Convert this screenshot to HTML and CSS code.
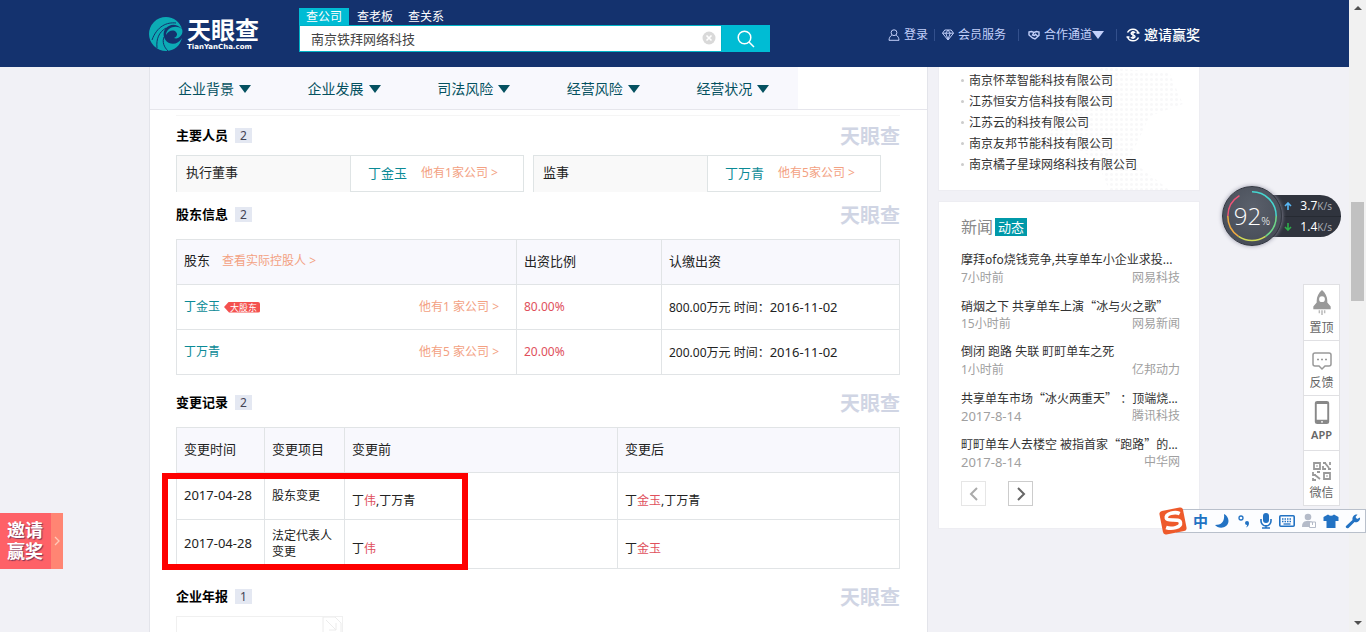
FILE: index.html
```html
<!DOCTYPE html>
<html lang="zh-CN">
<head>
<meta charset="utf-8">
<title>天眼查</title>
<link rel="stylesheet" href="styles.css">
</head>
<body>
<div class="screen">
  <div class="page">
    <header class="topbar">
      <div class="wrap topbar-inner">
        <a class="logo" href="#">
          <svg class="logo-mark" viewBox="0 0 34 34" aria-hidden="true">
            <path d="M17 0C25 0 31 5 33 12C27 6 21 7 17 11C13 15 14 23 20 26C25 28 30 26 33 21C31 29 25 34 17 34A17 17 0 0 1 17 0Z" fill="#0cabb5"/>
            <path d="M33 12C35 17 30 23 25 21C28 20 29 17 27 15C24 12 19 14 17 18C17 11 27 7 33 12Z" fill="#0cabb5"/>
            <g fill="none" stroke="#14326e" stroke-width="1">
              <path d="M27 6C18 5 8 9 3 23"/>
              <path d="M17 11C10 15 7 22 8 31"/>
              <path d="M15 20C13 25 15 30 19 34"/>
            </g>
          </svg>
          <span class="logo-text"><b>天眼查</b><small>TianYanCha.com</small></span>
        </a>
        <form class="search">
          <div class="tabs">
            <button type="button" class="tab active">查公司</button>
            <button type="button" class="tab">查老板</button>
            <button type="button" class="tab">查关系</button>
          </div>
          <div class="search-row">
            <input class="search-input" type="text" value="南京铁拜网络科技" aria-label="搜索">
            <button type="button" class="clear" aria-label="清除"><svg viewBox="0 0 14 14"><circle cx="7" cy="7" r="6.5" fill="#d9d9d9"/><path d="M4.500 4.500L9.500 9.500M9.500 4.500L4.500 9.500" stroke="#fff" stroke-width="1.600"/></svg></button>
            <button type="button" class="go" aria-label="查询"><svg viewBox="0 0 18 18" fill="none" stroke="#fff" stroke-width="1.500"><circle cx="7.500" cy="7.500" r="6.300"/><path d="M12 12L17 17"/></svg></button>
          </div>
        </form>
        <nav class="usernav">
          <a href="#"><svg viewBox="0 0 12 12" fill="none" stroke="#c3d0fa"><circle cx="6" cy="3.700" r="2.900"/><path d="M3.800 6.200C2 7.300 1.200 8.700 1 11.300H11C10.800 8.700 10 7.300 8.200 6.200"/></svg>登录</a>
          <i></i>
          <a href="#"><svg viewBox="0 0 12 12" fill="none" stroke="#c3d0fa"><path d="M2.800 1H9.200L11.500 4.200L6 11L.5 4.200ZM.5 4.200H11.500M3.800 4.200L6 10.500L8.200 4.200L6 1L3.800 4.200"/></svg>会员服务</a>
          <i></i>
          <a href="#"><svg viewBox="0 0 12 12" fill="none" stroke="#c3d0fa" stroke-width="1.400"><path d="M1 3L3.500 2.500L6 3.500L8.500 2.500L11 3L11 6.500L7 10L4.500 9L1 6ZM6 3.500L4.500 6L6.500 6.500L7.500 5.200L10 7.500"/></svg>合作通道<span class="caret"></span></a>
          <i></i>
          <a class="invite-link" href="#"><svg viewBox="0 0 14 14" fill="none" stroke="#fff" stroke-width="1.500"><path d="M1.500 4.500A6 6 0 0 1 12.500 5M12.500 9.500A6 6 0 0 1 1.500 9M10.500 5H13.500M.5 9H3.500M9.200 4.800C8 3.600 5.200 3.800 5.200 5.400C5.200 7.300 9 6.500 9 8.500C9 10.300 6 10.400 4.800 9.200M7 3V11"/></svg>邀请赢奖</a>
        </nav>
      </div>
    </header>

    <div class="wrap columns">
      <main class="main">
        <nav class="catnav">
          <a href="#">企业背景<span class="caret"></span></a>
          <a href="#">企业发展<span class="caret"></span></a>
          <a href="#">司法风险<span class="caret"></span></a>
          <a href="#">经营风险<span class="caret"></span></a>
          <a href="#">经营状况<span class="caret"></span></a>
        </nav>
        <div class="content">
          <section class="staff-section">
            <div class="head"><h2>主要人员</h2><span class="count">2</span><span class="mark">天眼查</span></div>
            <div class="staff">
              <div class="person"><span class="role">执行董事</span><span class="who"><a class="name" href="#">丁金玉</a><a class="more" href="#">他有1家公司 &gt;</a></span></div>
              <div class="person"><span class="role">监事</span><span class="who"><a class="name" href="#">丁万青</a><a class="more" href="#">他有5家公司 &gt;</a></span></div>
            </div>
          </section>

          <section class="holder-section">
            <div class="head"><h2>股东信息</h2><span class="count">2</span><span class="mark">天眼查</span></div>
            <table class="grid">
              <colgroup><col class="c-holder"><col class="c-ratio"><col></colgroup>
              <thead><tr><th>股东<a class="more control" href="#">查看实际控股人 &gt;</a></th><th>出资比例</th><th>认缴出资</th></tr></thead>
              <tbody>
                <tr><td><div class="holder"><a class="name" href="#">丁金玉</a><span class="major">大股东</span><a class="more" href="#">他有1 家公司 &gt;</a></div></td><td class="red">80.00%</td><td>800.00万元 时间：<time>2016-11-02</time></td></tr>
                <tr><td><div class="holder"><a class="name" href="#">丁万青</a><a class="more" href="#">他有5 家公司 &gt;</a></div></td><td class="red">20.00%</td><td>200.00万元 时间：<time>2016-11-02</time></td></tr>
              </tbody>
            </table>
          </section>

          <section class="change-section">
            <div class="head"><h2>变更记录</h2><span class="count">2</span><span class="mark">天眼查</span></div>
            <table class="grid changes">
              <colgroup><col class="c-date"><col class="c-item"><col class="c-before"><col></colgroup>
              <thead><tr><th>变更时间</th><th>变更项目</th><th>变更前</th><th>变更后</th></tr></thead>
              <tbody>
                <tr><td><time>2017-04-28</time></td><td>股东变更</td><td class="diff">丁<em>伟</em>,丁万青</td><td class="diff">丁<em>金玉</em>,丁万青</td></tr>
                <tr><td><time>2017-04-28</time></td><td>法定代表人变更</td><td class="diff">丁<em>伟</em></td><td class="diff">丁<em>金玉</em></td></tr>
              </tbody>
            </table>
          </section>

          <section class="report-section">
            <div class="head"><h2>企业年报</h2><span class="count">1</span><span class="mark">天眼查</span></div>
            <div class="report"><svg viewBox="0 0 20 16" fill="none" stroke="#ececec"><path d="M1 0V16M1 0H13L19 6V16M4 3L14 13M14 6V13H7"/></svg></div>
          </section>
        </div>
        <div class="highlight"></div>
      </main>

      <aside class="side">
        <section class="card related">
          <div class="map"></div>
          <ul>
            <li><a href="#">南京怀萃智能科技有限公司</a></li>
            <li><a href="#">江苏恒安方信科技有限公司</a></li>
            <li><a href="#">江苏云的科技有限公司</a></li>
            <li><a href="#">南京友邦节能科技有限公司</a></li>
            <li><a href="#">南京橘子星球网络科技有限公司</a></li>
          </ul>
        </section>
        <section class="card news">
          <h3>新闻<span>动态</span></h3>
          <article><a href="#">摩拜ofo烧钱竞争,共享单车小企业求投...</a><p><span>7小时前</span><span>网易科技</span></p></article>
          <article><a href="#">硝烟之下 共享单车上演<q>“</q>冰与火之歌<q>”</q></a><p><span>15小时前</span><span>网易新闻</span></p></article>
          <article><a href="#">倒闭 跑路 失联 町町单车之死</a><p><span>1小时前</span><span>亿邦动力</span></p></article>
          <article><a href="#">共享单车市场<q>“</q>冰火两重天<q>”</q> ：顶端烧...</a><p><time>2017-8-14</time><span>腾讯科技</span></p></article>
          <article><a href="#">町町单车人去楼空 被指首家<q>“</q>跑路<q>”</q>的...</a><p><time>2017-8-14</time><span>中华网</span></p></article>
          <div class="pager">
            <button type="button" class="prev" aria-label="上一页"><svg viewBox="0 0 12 14"><path d="M9 1L3 7L9 13"/></svg></button>
            <button type="button" aria-label="下一页"><svg viewBox="0 0 12 14"><path d="M3 1L9 7L3 13"/></svg></button>
          </div>
        </section>
      </aside>
    </div>
  </div>

  <div class="scrollbar"><span class="up"></span><span class="thumb"></span><span class="down"></span></div>

  <a class="invite" href="#"><b><span>邀请</span><span>赢奖</span></b><i><svg viewBox="0 0 6 10"><path d="M1 1L5 5L1 9" fill="none" stroke="#ffc9b8" stroke-width="1.300"/></svg></i></a>

  <div class="meter">
    <div class="dial">
      <svg viewBox="0 0 60 60" fill="none" stroke-width="1.600">
        <path d="M30 5A25 25 0 0 1 55 30" stroke="#46d6d0"/>
        <path d="M55 30A25 25 0 0 1 44 51" stroke="#6fd889"/>
        <path d="M44 51A25 25 0 0 1 16 51" stroke="#d2dc57"/>
        <path d="M16 51A25 25 0 0 1 5 30" stroke="#f0aa42"/>
        <path d="M5 30A25 25 0 0 1 17 9" stroke="#ed5577"/>
      </svg>
      <span class="pct">92<small>%</small></span>
    </div>
    <div class="rates">
      <div><svg viewBox="0 0 8 8" stroke="#58b7f5"><path d="M4 8V1M1 4L4 1L7 4"/></svg><span>3.7<small>K/s</small></span></div>
      <div><svg viewBox="0 0 8 8" stroke="#2fae4b"><path d="M4 0V7M1 4L4 7L7 4"/></svg><span>1.4<small>K/s</small></span></div>
    </div>
  </div>

  <nav class="tools">
    <a href="#"><svg viewBox="0 0 20 28" fill="#999"><path fill-rule="evenodd" d="M10 0C6.500 3 4.500 7 4.500 11V13L1 17V20H19V17L15.500 13V11C15.500 7 13.500 3 10 0ZM10 6.500A3 3 0 1 1 10 12.500A3 3 0 1 1 10 6.500Z"/><path d="M6.500 21H8V24H6.500ZM9.200 21H10.800V26H9.200ZM12 21H13.500V24H12Z" fill="#bbb"/></svg>置顶</a>
    <a href="#"><svg viewBox="0 0 20 20" fill="none" stroke="#999" stroke-width="1.500"><path d="M3 2H17Q19 2 19 4V13Q19 15 17 15H13L10 18L7 15H3Q1 15 1 13V4Q1 2 3 2Z"/><path d="M5 8.500H7M9 8.500H11M13 8.500H15"/></svg>反馈</a>
    <a href="#"><svg viewBox="0 0 16 24"><path fill="#888" fill-rule="evenodd" d="M3 0H13Q15.500 0 15.500 2V22Q15.500 24 13 24H3Q.5 24 .5 22V2Q.5 0 3 0ZM2.500 3V19.500H13.500V3ZM7 21V22.500H9V21Z"/></svg><strong>APP</strong></a>
    <a href="#"><svg viewBox="0 0 20 20" fill="none" stroke="#999" stroke-width="1.800"><path d="M2 2H8V8H2ZM12 12H18V18H12ZM4.500 5H5.500M14.500 15H15.500M11 2H14M13 2L17 7M18 1V4M11 5V8H14M16 8H19M1 11V14H4M5 11H8M3 14L8 18M1 17V19H4"/></svg>微信</a>
  </nav>

  <div class="ime">
    <svg class="ime-logo" viewBox="0 0 28 28"><g transform="rotate(-11 14 14)"><rect x="2" y="2" width="24" height="24" rx="3" fill="#ee5a2b"/><path d="M22 8C18 5 8 5 8 10C8 14 21 12 21 17C21 22 11 22 6 19" fill="none" stroke="#fff" stroke-width="3.600"/></g></svg>
    <b>中</b>
    <svg viewBox="0 0 16 16" fill="#2272c3"><path d="M10 1C11 9 7 12 1 12C4 16 14 16 14.500 8C14.500 5 12.500 2 10 1Z"/></svg>
    <svg viewBox="0 0 16 16"><circle cx="5" cy="5" r="2" fill="none" stroke="#2272c3" stroke-width="1.300"/><path d="M11 8A2 2 0 0 1 13 10C13 12 12 13.500 10 14.500C11 13 11 12.500 11 12A2 2 0 1 1 11 8Z" fill="#2272c3"/></svg>
    <svg viewBox="0 0 16 16"><rect x="5" y="0" width="6" height="10" rx="3" fill="#2272c3"/><path d="M3 6V8A5 5 0 0 0 13 8V6M8 12V15M4 15H12" fill="none" stroke="#2272c3" stroke-width="1.600"/></svg>
    <svg viewBox="0 0 16 16"><rect x=".8" y="2.800" width="14.400" height="10.400" rx="1" fill="none" stroke="#2272c3" stroke-width="1.600"/><path d="M3 6H13M3 8.500H13" stroke="#2272c3" stroke-width="1.500" stroke-dasharray="1.500 1"/><path d="M4.500 11H11.500" stroke="#2272c3" stroke-width="1.300"/></svg>
    <svg viewBox="0 0 16 16"><circle cx="7" cy="4" r="3.300" fill="#b4bbc9"/><path d="M1 14C1 9 3 8 7 8S13 9 13 14Z" fill="#b4bbc9"/><path d="M8.500 9H14.500V14.500H8.500ZM11.500 9V12" fill="#fff" stroke="#b4bbc9"/></svg>
    <svg viewBox="0 0 16 16" fill="#2272c3"><path d="M5 1.500Q8 4 11 1.500L15.500 4V8H12.500V15H3.500V8H.5V4Z"/></svg>
    <svg viewBox="0 0 16 16" fill="#2272c3"><path d="M1 13L7.500 7C7 4 9 1 12.500 1.500L10.500 4L12 6L15 4.500C15.500 8 12 10 9.500 9L3.500 15C2 16 0 14.500 1 13Z"/></svg>
  </div>
</div>
</body>
</html>
```

FILE: styles.css
```css
* { box-sizing: border-box; }
body {
  margin: 0;
  background: #f1f1f6;
  color: #222;
  font: 12px/18px "Noto Sans", "Noto Sans CJK SC", sans-serif;
}
a { color: inherit; text-decoration: none; }
button { font: inherit; border: 0; padding: 0; background: none; color: inherit; }
svg { display: block; flex: none; }
h2, h3, p, ul { margin: 0; padding: 0; }
time { font-size: 13px; }

.screen { position: relative; display: flex; height: 100vh; overflow: hidden; }
.page { flex: 1; min-width: 0; }
.wrap { max-width: 1051px; margin: 0 auto; }
.caret {
  display: inline-block;
  border: 6px solid transparent;
  border-top: 8px solid currentColor;
  border-bottom: 0;
}

/* top bar */
.topbar { background: #14326e; height: 67px; }
.topbar-inner { display: flex; height: 100%; align-items: flex-start; }
.logo { display: flex; width: 150px; gap: 4px; padding-top: 17px; color: #fff; }
.logo-mark { width: 34px; height: 34px; }
.logo-text { display: flex; flex-direction: column; }
.logo-text b { font-size: 24px; line-height: 26px; }
.logo-text small { font: bold 7px/8px "DejaVu Sans", sans-serif; }
.search { width: 471px; padding-top: 8px; }
.tabs { display: flex; gap: 1px; color: #fff; }
.tab { width: 50px; height: 17px; line-height: 17px; }
.tab.active { background: #00bcd4; }
.search-row { position: relative; display: flex; height: 27px; }
.search-input {
  flex: 1;
  min-width: 0;
  border: 1px solid #00b3c7;
  background: #fff;
  padding: 0 32px 0 11px;
  color: #444;
  font: 13px "Noto Sans", "Noto Sans CJK SC", sans-serif;
}
.clear { position: absolute; right: 54px; top: 6px; }
.clear svg { width: 14px; height: 14px; }
.go { width: 48px; background: #00bcd4; display: grid; place-items: center; }
.go svg { width: 18px; height: 18px; }
.usernav { display: flex; align-items: center; margin-left: auto; padding-top: 26px; color: #c3d0fa; }
.usernav a { display: flex; align-items: center; gap: 4px; }
.usernav .caret { margin-left: -4px; }
.usernav svg { width: 12px; height: 12px; }
.usernav i { width: 1px; height: 12px; margin: 0 7px 0 6px; background: #33508c; }
.usernav i ~ i { margin: 0 9px 0 12px; }
.usernav .invite-link { color: #fff; font-size: 14px; font-weight: 500; }
.usernav .invite-link svg { width: 14px; height: 14px; }

/* columns */
.columns { display: flex; gap: 10px; }
.main {
  position: relative;
  flex: 1;
  min-width: 0;
  background: #fff;
  border: solid #e3e4ea;
  border-width: 0 1px;
}
.catnav { display: flex; height: 43px; padding: 2px 129px 0 0; border-bottom: 1px solid #e6e6ec; background: linear-gradient(#f8f8fd, #f8f8fd) no-repeat 0 0 / 648px 100%; }
.catnav a { flex: 1; display: flex; align-items: center; gap: 5px; padding-left: 28px; font-size: 14px; white-space: nowrap; color: #055160; }
.content { padding: 5px 27px 0 26px; height: 540px; }
.staff-section { border-top: 1px solid #f5f5f5; padding-top: 4px; }
.holder-section { padding-top: 7px; }
.change-section, .report-section { padding-top: 12px; }

.head { display: flex; align-items: center; height: 30px; }
.head h2 { font-size: 13px; color: #000; font-weight: 600; }
.count { width: 17px; height: 15px; line-height: 15px; margin-left: 7px; text-align: center; background: #e4e8f2; color: #445; }
.mark { margin-left: auto; padding-top: 3px; font-size: 20px; font-weight: 600; color: #d0d5e4; }

.staff { display: flex; gap: 9px; margin: 5px 19px 0 0; }
.person { flex: 1; display: flex; height: 37px; border: solid #dfe4e5; border-width: 1px 1px 0; }
.role, .who { width: 50%; }
.role { padding: 7px 9px; font-size: 13px; background: #f9f9f9; }
.who { display: flex; align-items: center; gap: 14px; padding: 0 17px 2px; white-space: nowrap; border: solid #dfe4e5; border-width: 0 0 1px 1px; }
.who .name { font-size: 13px; }
.name { color: #0b8a96; }
.more { color: #f3a182; }

.grid { width: 100%; margin-top: 10px; border-collapse: collapse; table-layout: fixed; }
.grid th, .grid td { height: 45px; padding: 0 7px; border: 1px solid #e1e4e6; text-align: left; line-height: 16px; }
.grid th { padding-bottom: 3px; font-size: 13px; font-weight: 400; background: #f8f8fd; }
.c-holder { width: 340px; }
.c-ratio { width: 145px; }
.c-date { width: 88px; }
.c-item { width: 80px; }
.c-before { width: 273px; }
.control { font-size: 12px; margin-left: 12px; }
.holder { display: flex; align-items: center; padding-right: 10px; }
.holder .more { margin-left: auto; }
.major {
  margin-left: 4px;
  padding: 0 3px 0 6px;
  background: #f4514f;
  color: #fff;
  font-size: 9px;
  line-height: 11px;
  border-radius: 2px;
  clip-path: polygon(0 50%, 5px 0, 100% 0, 100% 100%, 5px 100%);
}
.red, .grid em { color: #e0505c; font-style: normal; }
.changes td { height: 47px; padding-bottom: 1px; }
.changes tr:last-child td { height: 49px; }
.grid .diff { padding-top: 10px; }
.report { display: flex; justify-content: flex-end; width: 167px; height: 60px; margin-top: 5px; border: 1px solid #f0f0f0; }
.report svg { width: 20px; height: 16px; }
.highlight { position: absolute; left: 12px; top: 406px; width: 306px; height: 97px; border: 6px solid #fe0000; }

/* right column */
.side { width: 262px; display: flex; flex-direction: column; gap: 10px; }
.card { position: relative; background: #fff; border: 1px solid #ededf2; padding: 0 19px 0 22px; }
.related { border-top: 0; padding-top: 3px; padding-bottom: 15px; }
.related ul { position: relative; list-style: none; color: #333; }
.related li { height: 21px; line-height: 21px; display: flex; align-items: center; gap: 5px; }
.related li::before { content: ""; width: 3px; height: 3px; border-radius: 50%; background: #ccc; }
.map {
  position: absolute;
  inset: 0 16px 0 110px;
  background: radial-gradient(circle, #f8f8f9 1px, transparent 2px) 0 0 / 5px 5px;
  clip-path: polygon(40% 0, 90% 5%, 100% 30%, 75% 40%, 60% 75%, 90% 100%, 45% 100%, 35% 75%, 0 55%, 15% 20%);
}
.news { padding-top: 15px; padding-bottom: 22px; }
.news h3 { display: flex; align-items: center; gap: 2px; height: 20px; font-size: 16px; font-weight: 400; color: #888; }
.news h3 span { padding: 0 3px; background: #0099a9; color: #fff; font-size: 13px; line-height: 18px; }
.news article { margin-bottom: 10px; white-space: nowrap; line-height: 18px; }
.news h3 + article { margin-top: 14px; }
.news article a { display: block; height: 18px; color: #333; }
.news q { quotes: none; font-family: "Noto Sans CJK SC", sans-serif; }
.news p { display: flex; justify-content: space-between; height: 18px; color: #a0a0a0; }
.pager { display: flex; gap: 22px; }
.pager button { width: 25px; height: 25px; display: grid; place-items: center; border: 1px solid #ccc; }
.pager svg { width: 12px; height: 14px; fill: none; stroke: #666; stroke-width: 2; }
.pager .prev { border-color: #e6e6e6; }
.pager .prev svg { stroke: #aaa; }

/* scrollbar */
.scrollbar { width: 17px; background: #f1f1f1; display: flex; flex-direction: column; align-items: center; padding: 6px 0 7px; }
.up, .down { border: 4px solid transparent; }
.up { border-top: 0; border-bottom-color: #505050; }
.down { border-bottom: 0; border-top-color: #505050; margin-top: auto; }
.thumb { width: 13px; height: 99px; margin-top: 192px; background: #c1c1c1; }

/* floating widgets */
.invite { position: absolute; left: 0; top: 513px; display: flex; height: 56px; background: #fe6167; color: #fff; }
.invite b { display: flex; flex-direction: column; width: 51px; padding: 7px 0 0 7px; font-size: 18px; line-height: 21px; text-shadow: 1px 1px 1px #7b3555; }
.invite i { display: grid; place-items: center; width: 12px; background: #ff8573; }
.invite svg { width: 6px; height: 10px; }

.meter { position: absolute; right: 25px; top: 186px; display: flex; align-items: center; width: 119px; }
.dial { position: relative; z-index: 1; width: 60px; height: 60px; border-radius: 50%; background: radial-gradient(circle at 50% 35%, #5a606b, #434853); border: 1px solid #343842; box-shadow: 0 0 4px #99a; }
.pct { position: absolute; inset: 0; display: flex; justify-content: center; align-items: baseline; color: #fff; font: 300 24px/58px "Open Sans", sans-serif; }
.pct small { font-size: 11px; }
.rates { flex: 1; margin-left: -30px; padding-left: 32px; background: #30343e; border-radius: 0 21px 21px 0; color: #fff; }
.rates div { display: flex; align-items: center; justify-content: space-between; height: 21px; padding-right: 9px; }
.rates div + div { border-top: 1px solid #262a32; }
.rates svg { width: 8px; height: 8px; fill: none; stroke-width: 1.6; }
.rates small { font-size: 10px; color: #a5a8b0; }

.tools { position: absolute; right: 26px; top: 284px; width: 37px; background: #fff; border: 1px solid #e0e0e3; color: #666; }
.tools a { display: flex; flex-direction: column; align-items: center; justify-content: flex-end; gap: 3px; height: 55px; padding-bottom: 4px; line-height: 16px; }
.tools a + a { border-top: 1px solid #e0e0e3; }
.tools svg { width: 20px; height: 22px; }
.tools a:first-child svg { height: 27px; }
.tools a:nth-child(3) { padding-bottom: 7px; }
.tools a:nth-child(3) svg { width: 16px; height: 23px; }
.tools strong { font-size: 11px; font-weight: 600; }

.ime { position: absolute; right: 0; top: 509px; display: flex; align-items: center; justify-content: space-between; width: 190px; height: 24px; padding: 0 4px 0 16px; background: #fcfdff; border: 1px solid #b9c0cb; }
.ime b { font-size: 15px; color: #2272c3; }
.ime svg { width: 16px; height: 16px; }
.ime .ime-logo { position: absolute; left: -18px; top: -3px; width: 28px; height: 28px; }
```
